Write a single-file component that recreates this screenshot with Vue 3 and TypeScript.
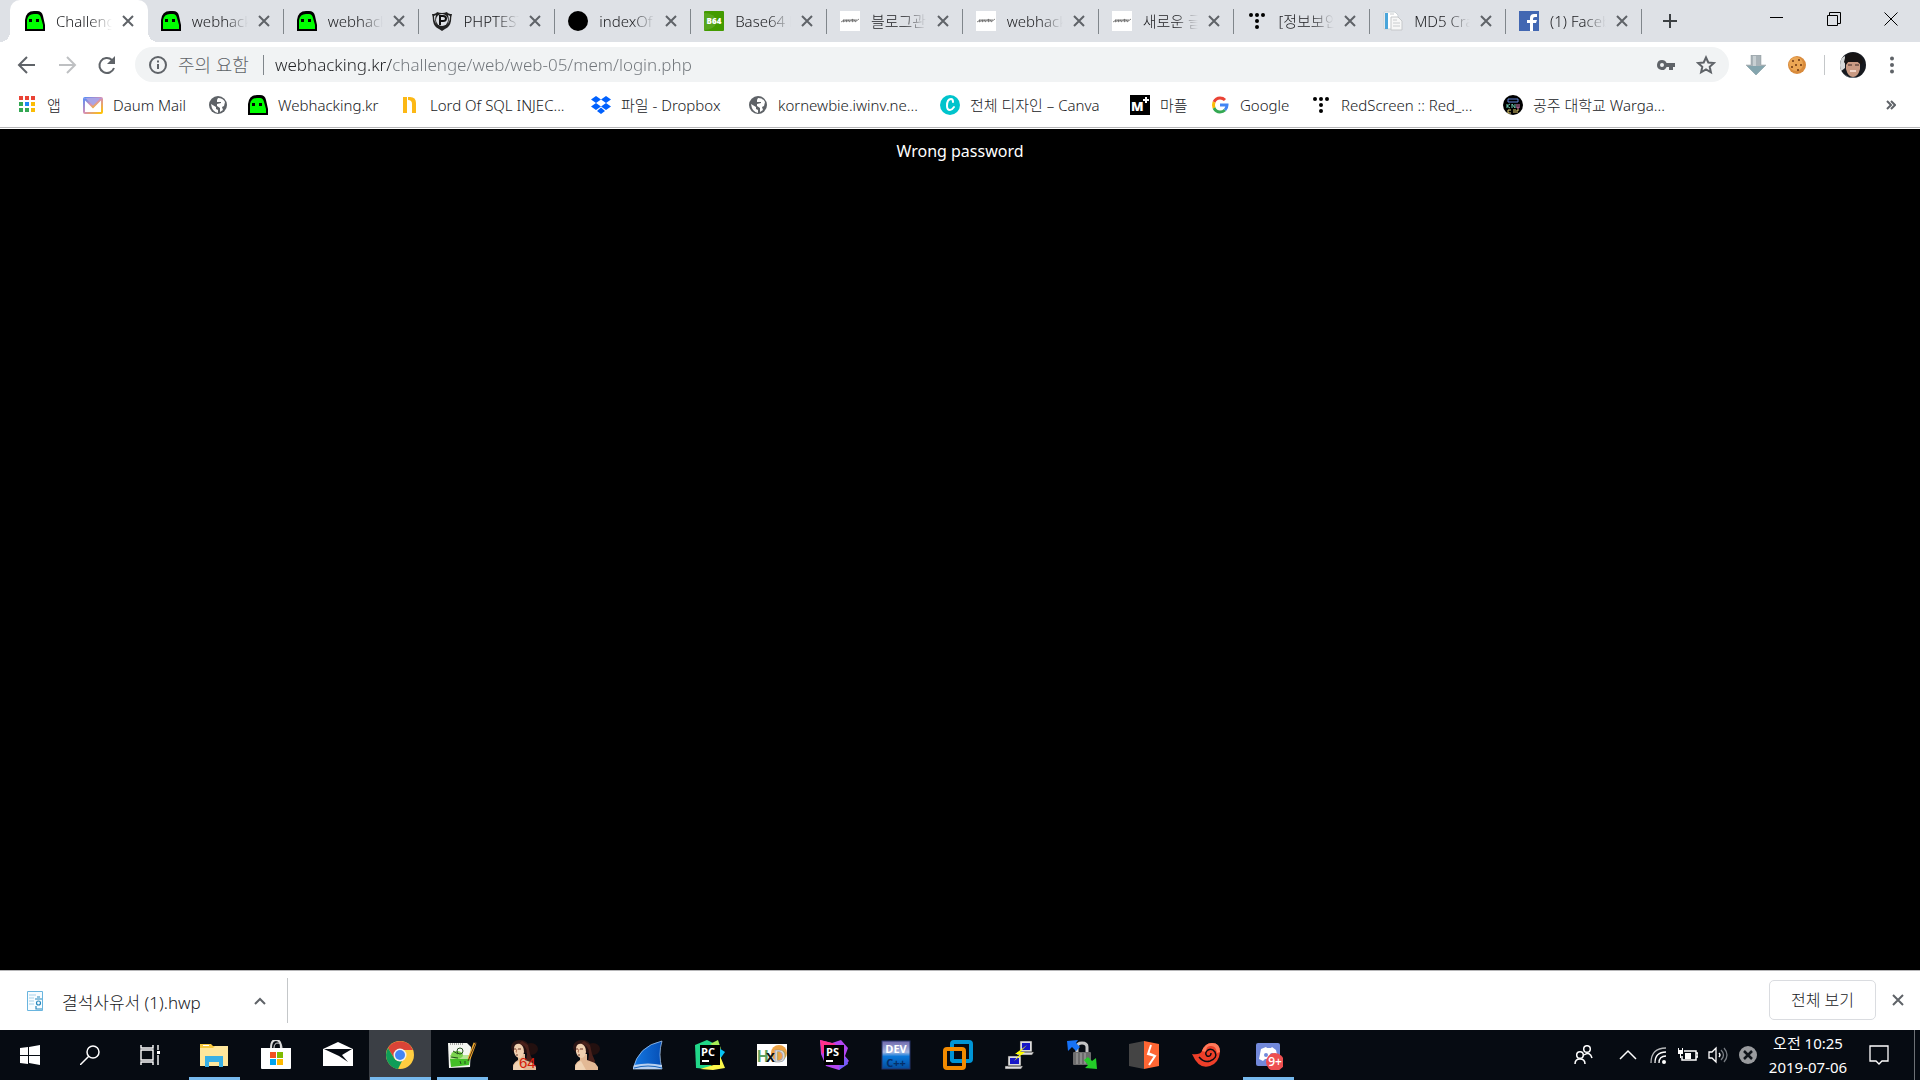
<script setup lang="ts">
import { ref } from 'vue'

interface Entry {
  icon: string
  label: string
}

interface TaskApp extends Entry {
  open?: boolean
  active?: boolean
}

const portrait =
  '<ellipse cx="11" cy="7" rx="9" ry="7" fill="#2b1514"/><ellipse cx="22" cy="9" rx="7" ry="6" fill="#23100f"/><path fill="#4a211b" d="M9 4q9 0 9 10l-1 8 5 4 2-5-3-7-2-9-6-4z"/><path fill="#e3b995" d="M9 14h7v6l8 3 3 4v3H4v-5q1-3 5-5z"/><path fill="#f0d3b4" d="M4 30q0-7 6-9l5 9z"/><path fill="#f0d0b0" d="M5 8q1-5 6-4 4 2 4 8-1 6-5 6-4-1-5-6z"/><path fill="none" stroke="#6d3526" d="M5 9h2M9 9h3M7 15h2"/><path fill="none" stroke="#b8795c" d="M8 9l-1 3h1"/>'

const icons: Record<string, string> = {
  ghost: '<path fill="#000" d="M0 20V9Q1 0 9 0h3q5 0 6 5l2 9v6z"/><path fill="#0f0" d="M2 18V9q1-6 7-6h3q3 0 4 4l2 7v4z"/><path d="M4 8h3v3H4zM11 8h3v3h-3z"/>',
  shield: '<path fill="#222" d="M0 3q4 0 5-2 5 2 10 0 1 2 5 2-1 3-1 7-1 6-6 8l-3 2-3-2Q2 16 1 10 1 6 0 3z"/><path fill="#dee1e6" d="M2 5l2-1q-2 6 1 10-3-3-3-9zM18 5l-2-1q2 6-1 10 3-3 3-9z"/><circle cx="10" cy="9" r="6" fill="#dee1e6"/><path fill="none" stroke="#111" stroke-width="2" d="M8 14V5h3q3 0 3 2.500t-3 2.500H8"/>',
  disc: '<circle cx="10" cy="10" r="10"/>',
  b64: '<rect width="20" height="20" rx="1" fill="#439b00"/><path fill="#68ad31" d="M0 2q11 0 13 9-3 8-13 8z" opacity=".6"/><text x="10" y="13" text-anchor="middle" font-family="Open Sans, sans-serif" font-size="8" font-weight="800" fill="#fff">B64</text>',
  blog: '<path fill="#fff" d="M0 0h20v20H0z"/><path fill="none" stroke="#666" stroke-width=".8" d="M1 11l3-2-1 2 4-2-1 2 3-2v2l4-3-1 3 3-2v2l4-3M3 9h14"/>',
  dots: '<g><circle cx="4" cy="4" r="2"/><circle cx="10" cy="4" r="2"/><circle cx="16" cy="4" r="2"/><circle cx="10" cy="10" r="2"/><circle cx="10" cy="16" r="2"/></g>',
  pages: '<path fill="#fff" stroke="#ccd2d6" d="M1 1h11l3 3v14H1z"/><path fill="#4aa5da" d="M2 2h3v16H2z"/><path fill="#f7f7f7" stroke="#c5c8ca" d="M8 6h7l4 4v9H8z"/><path fill="none" stroke="#c9ccce" d="M7 3h4M10 9h4M10 12h7M10 15h7"/>',
  facebook: '<path fill="#4267b2" d="M0 0h20v20H0z"/><path fill="#fff" d="M11 20v-8H8V9h3V7q0-4 4-4h3v3h-2q-2 0-2 2v1h4l-1 3h-3v8z"/>',
  apps: '<path fill="#ea4335" d="M2 1h4v4H2zM8 1h4v4H8zM14 1h4v4h-4z"/><path fill="#34a853" d="M2 7h4v4H2zM2 13h4v4H2zM8 13h4v4H8z"/><path fill="#1e88f7" d="M8 7h4v4H8z"/><path fill="#fbbc05" d="M14 7h4v4h-4zM14 13h4v4h-4z"/>',
  mail: '<defs><linearGradient id="mailA" x2="1" y2="1"><stop stop-color="#5b8df4"/><stop offset=".5" stop-color="#d78fb5"/><stop offset="1" stop-color="#ffc400"/></linearGradient></defs><rect x="1" y="3" width="18" height="15" rx="1" fill="#fff" stroke="url(#mailA)" stroke-width="2"/><path fill="#a9a4e6" d="M1 3h18l-9 10z"/><path fill="none" stroke="url(#mailA)" stroke-width="2" d="M2 4l8 8 8-8"/>',
  globe: '<circle cx="10" cy="10" r="9" fill="#5f6368"/><path fill="#fff" d="M3 9l5 3v2l2 1v3q-6-1-7-9zM10 3q5 0 7 4l-1 4-2 1 1 3-3 2v-4l-3-2V9l4-1V7H9V5z"/>',
  sql: '<path fill="#fcb815" d="M3 2h4v16H3zM8 2h2q6 0 6 6v10h-4V9q0-4-4-4z"/>',
  dropbox: '<path fill="#0061fe" d="M5 1l5 3.500-5 3.500-5-3.500zM15 1l5 3.500-5 3.500-5-3.500zM5 8l5 3.500-5 3.500-5-3.500zM15 8l5 3.500-5 3.500-5-3.500zM10 12.500l4 3.500-4 3-4-3z"/>',
  canva: '<circle cx="10" cy="10" r="10" fill="#00c4cc"/><path fill="none" stroke="#fff" stroke-width="2" stroke-linecap="round" d="M13 7q0-3-2-3-4 0-4 7 0 4 3 4 2 0 4-3"/>',
  maple: '<path d="M0 0h20v20H0z"/><text x="1" y="16" font-family="Open Sans, sans-serif" font-size="13" font-weight="800" fill="#fff">M</text><path stroke="#fff" stroke-width="2" d="M16 2v6M13 5h6"/>',
  google: '<g fill="none" stroke-width="3"><path stroke="#ea4335" d="M4 7q2-4 6-4 3 0 5 2"/><path stroke="#fbbc05" d="M4 13q-1-3 0-6"/><path stroke="#34a853" d="M4 13q2 4 6 4 3 0 5-2"/><path stroke="#4285f4" d="M10 10h7q0 3-2 5"/></g>',
  knu: '<circle cx="10" cy="10" r="10"/><g fill="none" stroke-width="1"><path stroke="#6284d8" d="M5 4h10v3H5z"/><path stroke="#6ec8b0" d="M4 9v4M7 9l-3 2 3 2M9 13V9l3 4V9"/><path stroke="#db80b8" d="M14 9v4h2V9"/><path stroke="#e4cf71" d="M8 15H5v3h3M10 15h3M10 17h3M16 15h-2v3"/></g>',
  windows: '<path fill="#fff" d="M0 3l8-1v8H0zM9 2l11-2v10H9zM0 11h8v8l-8-1zM9 11h11v9L9 18z"/>',
  search: '<g fill="none" stroke="#fff" stroke-width="1.500"><circle cx="13" cy="7" r="6"/><path d="M9 11L0 20"/></g>',
  taskview: '<g fill="none" stroke="#fff" stroke-width="1.400"><path d="M1 0v3h12V0M1 5h12v10H1zM1 20v-3h12v3M18 0v5M18 10v10"/></g><path fill="#fff" d="M17 6h3v3h-3z"/>',
  explorer: '<path fill="#f8c93e" d="M1 4h11l2 2h15v20H1z"/><path fill="#ffe79b" d="M1 8h13l2-2h13v20H1z"/><path fill="#fff" d="M4 5h6v1H4z"/><path fill="#39b0e5" d="M6 16h18v11h-4v-5H10v5H6z"/>',
  store: '<g fill="none" stroke="#ddd"><path stroke-width="2" d="M10 8q0-8 5-8t5 8"/><path d="M13 8q0-5 4-5t4 5"/></g><path fill="#fff" d="M0 8h30v20q0 1-1 1H1q-1 0-1-1z"/><path fill="#f25022" d="M9 12h6v6H9z"/><path fill="#7fba00" d="M16 12h6v6h-6z"/><path fill="#00a4ef" d="M9 19h6v6H9z"/><path fill="#ffb900" d="M16 19h6v6h-6z"/>',
  envelope: '<path fill="#fff" d="M0 9l15-7 15 7v17H0z"/><path fill="#060b12" d="M1 9h28l-10 6 6 7-9-6z"/>',
  chrome: '<circle cx="15" cy="15" r="14" fill="#ffcd40"/><path fill="#db4437" d="M3 8a14 14 0 0 1 25 2H15l-6 8z"/><path fill="#0f9d58" d="M3 8l6 10q3 4 8 3l-4 8A14 14 0 0 1 3 8z"/><circle cx="15" cy="15" r="6.500" fill="#f1f1f1"/><circle cx="15" cy="15" r="5" fill="#4285f4"/>',
  notepad: '<path fill="#f5f7f2" d="M1 3h19l4 4-1 20-21 1z"/><path stroke="#555" stroke-dasharray="1 1" d="M3 4h13"/><path fill="#b6e693" d="M3 15h19v4H3z"/><path fill="#43bf27" d="M3 19h20l-1 6-18 2z"/><ellipse cx="10" cy="15" rx="6" ry="4" fill="#7ad34d"/><g fill="none" stroke="#264e20"><circle cx="13" cy="11" r="3"/><path d="M4 17l7 1M6 11l5 3M13 21l1 3M18 21v3"/></g><path stroke="#f1ae2c" stroke-width="3" d="M28 3l-6 16"/><path stroke="#552f17" d="M29 2l-8 19"/>',
  ida: portrait,
  ida64: portrait + '<text x="10" y="28" font-family="Liberation Sans, sans-serif" font-size="15" font-weight="400" fill="#d61d0b">64</text>',
  shark: '<defs><linearGradient id="fin"><stop stop-color="#1479e4"/><stop offset="1" stop-color="#064fb5"/></linearGradient></defs><path fill="url(#fin)" stroke="#b4d3f4" stroke-width=".7" d="M0 29Q5 6 29 1q-4 13 0 28z"/><path fill="#b8d0ef" d="M1 25q14-3 28 0v4H0z"/><path fill="none" stroke="#1765bb" d="M1 28q14-4 28 0"/>',
  pycharm: '<path fill="#21d789" d="M0 5l12-5 8 4 1 16-8 9-12-1z"/><path fill="#a8ed54" d="M15 4l8-4 3 9z"/><path fill="#07c3f2" d="M24 8l6 4-5 7z"/><path fill="#fcf84a" d="M25 16l5 12-12 2-13-1 17-5z"/><path fill="#000" d="M5 5h20v20H5z"/><text x="6" y="16" font-family="Open Sans, sans-serif" font-size="11" font-weight="700" fill="#fff">PC</text><path fill="#fff" d="M7 20h7v2H7z"/>',
  hxd: '<path fill="#fff" d="M0 4h30v22H0z"/><circle cx="22" cy="13" r="8" fill="#eca345"/><g font-family="Liberation Sans, sans-serif" font-weight="700"><text x="0" y="22" font-size="16" fill="#5ca061">H</text><text x="17" y="22" font-size="16" fill="#dedede" stroke="#888" stroke-width=".5">D</text><text x="9" y="22" font-size="16" fill="#111">x</text></g>',
  phpstorm: '<path fill="#b345f1" d="M1 0l12 3 9-3 7 8-3 8 4 5-10 9-13-4-5-12z"/><path fill="#ff318c" d="M1 0l16 4-14 10z"/><path fill="#765af8" d="M21 19l7-1 1 6-9 6z"/><path d="M5 5h20v20H5z"/><text x="7" y="16" font-family="Open Sans, sans-serif" font-size="11" font-weight="700" fill="#fff">PS</text><path fill="#fff" d="M7 20h7v2H7z"/>',
  dev: '<defs><linearGradient id="devB" x2="0" y2="1"><stop stop-color="#7069ac"/><stop offset=".4" stop-color="#a4b8e2"/><stop offset=".55" stop-color="#0877d9"/><stop offset="1" stop-color="#064c9c"/></linearGradient></defs><rect x="1" y="1" width="28" height="28" fill="url(#devB)" stroke="#263469"/><g font-family="Open Sans, sans-serif" font-weight="700" text-anchor="middle"><text x="15" y="13" font-size="11" fill="#fff">DEV</text><text x="15" y="27" font-size="11" fill="#052f68">C++</text></g>',
  vmware: '<g fill="none" stroke-width="4"><rect x="9" y="2" width="19" height="19" rx="2" stroke="#0095d5"/><rect x="2" y="9" width="19" height="19" rx="2" stroke="#f38b00"/><path stroke="#0095d5" d="M9 14v5q0 2 2 2h8"/></g>',
  putty: '<g stroke="#222" stroke-width=".5"><path fill="#ddd" d="M15 1h12v11H15zM12 12h17l-2 3H12zM3 16h13v10H3zM0 26h18l-2 3H0z"/></g><path fill="#1717c8" d="M17 3h8v7h-8zM5 18h9v6H5z"/><path fill="#ff0" d="M22 5L10 14h5l-6 7 11-9h-5z"/>',
  lock: '<path fill="none" stroke="#c4c4c4" stroke-width="3" d="M10 14V7q0-4 5-4t5 4v7"/><rect x="6" y="12" width="18" height="13" rx="1" fill="#6c6c6c"/><path stroke="#aaa" d="M10 13v11M14 13v11M18 13v11"/><path fill="#1672f7" d="M0 1l11-1-2 3 4 4-4 4-4-4-4 4z"/><path fill="#23cd28" d="M30 29l-12-1 3-3-4-5 4-3 4 4 4-3z"/>',
  burp: '<path fill="#444" d="M0 4l15-3v28L0 26z"/><path fill="#ff6633" d="M15 1l15 3v22l-15 3z"/><path fill="none" stroke="#fff" stroke-width="2" d="M22 5l-3 9 7 2-6 9M19 13l7 3"/>',
  snail: '<path fill="#ed3f29" d="M1 14q8 1 10-3 3-8 10-8 8 0 8 9-1 11-10 14Q8 30 1 14z"/><path fill="#ff7b5b" d="M11 11q3-8 10-8 8 0 8 9l-3 1q-1-8-7-7-4 0-4 6z"/><path fill="none" stroke="#060b12" stroke-width="1.500" d="M8 17q5 6 11 4 8-3 5-9-3-4-7-2-4 3-1 6 4 1 4-3"/>',
  discord: '<rect x="3" y="3" width="24" height="23" rx="2" fill="#7289da"/><path fill="#fff" d="M8 9l5-2 1 1h4l1-1 4 3 2 9-4 2-2-2h-7l-2 2-4-2z"/><circle cx="13" cy="15" r="2" fill="#7289da"/><circle cx="19" cy="15" r="2" fill="#7289da"/><circle cx="22" cy="22" r="9" fill="#ed4f50"/><text x="22" y="26" text-anchor="middle" font-family="Open Sans, sans-serif" font-size="12" font-weight="600" fill="#fff">9+</text>',
  people: '<g fill="none" stroke="#fff" stroke-width="1.500"><circle cx="14" cy="4" r="3.300"/><circle cx="7" cy="10" r="3.300"/><path d="M2 19q0-5 5-5t5 5M11 10q6-4 8 3"/></g>',
  up: '<path fill="none" stroke="#fff" stroke-width="1.500" d="M2 14l8-8 8 8"/>',
  wifi: '<g fill="none" stroke="#fff" stroke-width="1.300"><path d="M3 18Q3 3 18 3" opacity=".7"/><path d="M7 18Q7 7 18 7M11 18q0-7 7-7"/></g><circle cx="16" cy="17" r="2" fill="#fff"/>',
  battery: '<path fill="none" stroke="#fff" stroke-width="1.500" d="M6 6h12v9H4v-4M18 8h2v4h-2"/><path fill="#fff" d="M7 8h6v6H7zM0 5h5v4H3v4H2V9H0zM0 3h1v2H0zM4 3h1v2H4z"/>',
  sound: '<path fill="none" stroke="#fff" stroke-width="1.300" d="M1 7h3l4-4v14l-4-4H1zM11 8q2 2 0 4"/><path fill="none" stroke="#777c82" stroke-width="1.300" d="M13 5q5 5 0 10M16 3q6 7 0 14"/>',
  blocked: '<circle cx="10" cy="10" r="9" fill="#999b9e"/><path stroke="#10151b" stroke-width="2.500" d="M6 6l8 8M14 6l-8 8"/>',
  notice: '<path fill="none" stroke="#fff" stroke-width="1.300" d="M1 1h18v15h-6l-3 3-3-3H1z"/>',
}

const tabs: Entry[] = [
  { icon: 'ghost', label: 'Challenge' },
  { icon: 'ghost', label: 'webhacking' },
  { icon: 'ghost', label: 'webhacking' },
  { icon: 'shield', label: 'PHPTEST' },
  { icon: 'disc', label: 'indexOf' },
  { icon: 'b64', label: 'Base64 D' },
  { icon: 'blog', label: '블로그관' },
  { icon: 'blog', label: 'webhack' },
  { icon: 'blog', label: '새로운 글' },
  { icon: 'dots', label: '[정보보안' },
  { icon: 'pages', label: 'MD5 Crack' },
  { icon: 'facebook', label: '(1) Facebook' },
]

const bookmarks: Entry[] = [
  { icon: 'apps', label: '앱' },
  { icon: 'mail', label: 'Daum Mail' },
  { icon: 'globe', label: '' },
  { icon: 'ghost', label: 'Webhacking.kr' },
  { icon: 'sql', label: 'Lord Of SQL INJEC...' },
  { icon: 'dropbox', label: '파일 - Dropbox' },
  { icon: 'globe', label: 'kornewbie.iwinv.ne...' },
  { icon: 'canva', label: '전체 디자인 – Canva' },
  { icon: 'maple', label: '마플' },
  { icon: 'google', label: 'Google' },
  { icon: 'dots', label: 'RedScreen :: Red_...' },
  { icon: 'knu', label: '공주 대학교 Warga...' },
]

const system: Entry[] = [
  { icon: 'windows', label: 'Start' },
  { icon: 'search', label: 'Search' },
  { icon: 'taskview', label: 'Task view' },
]

const apps: TaskApp[] = [
  { icon: 'explorer', label: 'Explorer', open: true },
  { icon: 'store', label: 'Store' },
  { icon: 'envelope', label: 'Mail' },
  { icon: 'chrome', label: 'Chrome', open: true, active: true },
  { icon: 'notepad', label: 'Notepad++', open: true },
  { icon: 'ida64', label: 'IDA 64' },
  { icon: 'ida', label: 'IDA' },
  { icon: 'shark', label: 'Wireshark' },
  { icon: 'pycharm', label: 'PyCharm' },
  { icon: 'hxd', label: 'HxD' },
  { icon: 'phpstorm', label: 'PhpStorm' },
  { icon: 'dev', label: 'Dev-C++' },
  { icon: 'vmware', label: 'VMware' },
  { icon: 'putty', label: 'PuTTY' },
  { icon: 'lock', label: 'WinSCP' },
  { icon: 'burp', label: 'Burp Suite' },
  { icon: 'snail', label: 'Nautilus' },
  { icon: 'discord', label: 'Discord', open: true },
]

const tray: Entry[] = [
  { icon: 'wifi', label: 'Network' },
  { icon: 'battery', label: 'Battery' },
  { icon: 'sound', label: 'Volume' },
  { icon: 'blocked', label: 'Sync' },
]

const address = ref('webhacking.kr/challenge/web/web-05/mem/login.php')
const current = ref(0)
</script>

<template>
  <div class="screen">
    <header class="strip">
      <div class="tabs">
        <div v-for="(tab, i) in tabs" :key="i" class="tab" :class="{ current: i === current }">
          <button class="tab-title" @click="current = i">
            <svg class="i20" viewBox="0 0 20 20" v-html="icons[tab.icon]"></svg>
            <span>{{ tab.label }}</span>
          </button>
          <button class="close" aria-label="Close tab">
            <svg viewBox="0 0 12 12"><path d="M1 1l10 10M11 1L1 11" /></svg>
          </button>
        </div>
      </div>
      <button class="new-tab" aria-label="New tab">
        <svg viewBox="0 0 16 16"><path d="M8 1v14M1 8h14" /></svg>
      </button>
      <div class="window">
        <button aria-label="Minimize"><svg viewBox="0 0 14 14"><path d="M0 5.500h13" /></svg></button>
        <button aria-label="Restore"><svg viewBox="0 0 14 14"><path d="M.5 3.500h10v10H.500zM2.500 3V.500h11v11H11" /></svg></button>
        <button aria-label="Close"><svg viewBox="0 0 14 14"><path d="M.5.500l13 13M13.500.500l-13 13" /></svg></button>
      </div>
    </header>

    <div class="toolbar">
      <nav class="history">
        <button aria-label="Back"><svg viewBox="0 0 20 20"><path d="M18 10H3M10 2l-8 8 8 8" /></svg></button>
        <button class="dim" aria-label="Forward"><svg viewBox="0 0 20 20"><path d="M2 10h15M10 2l8 8-8 8" /></svg></button>
        <button aria-label="Reload"><svg viewBox="0 0 20 20"><path d="M17 13a7.500 7.500 0 1 1-2-8l2 2" /><path class="solid" d="M18 1v8h-8z" /></svg></button>
      </nav>
      <form class="omnibox" @submit.prevent>
        <svg class="i20 line" viewBox="0 0 20 20"><circle cx="10" cy="10" r="8" /><path d="M10 9v5M10 5.500v2" /></svg>
        <label for="address">주의 요함</label>
        <input id="address" v-model="address" type="text" spellcheck="false" />
        <button type="button" aria-label="Password">
          <svg class="i20" viewBox="0 0 20 20"><path class="solid" fill-rule="evenodd" d="M6 5a5 5 0 0 1 4.600 3H19v4h-2v3h-4v-3h-2.400A5 5 0 1 1 6 5zm0 3a2 2 0 1 0 0 4 2 2 0 0 0 0-4z" /></svg>
        </button>
        <button type="button" aria-label="Bookmark">
          <svg class="i20 line" viewBox="0 0 20 20"><path d="M10 2.500l2.300 5 5.500.600-4.100 3.700 1.200 5.500-4.900-2.900-4.900 2.900 1.200-5.500L2.200 8.100l5.500-.6z" /></svg>
        </button>
      </form>
      <div class="extensions">
        <button aria-label="Downloader">
          <svg class="i20" viewBox="0 0 20 20"><path fill="#a9b3b8" stroke="#8f9a9f" stroke-width=".5" d="M5 0h10v10h5L10 20 0 10h5z" /><path fill="#84a5ae" d="M1 11h18l-9 9z" /><path fill="#c8d0d3" d="M7 1h3v10H7z" /></svg>
        </button>
        <button aria-label="Cookies">
          <svg class="i20" viewBox="0 0 20 20"><circle cx="10" cy="10" r="9" fill="#d98b3c" /><circle cx="9" cy="9" r="7" fill="#eba654" /><g fill="#6d3510"><circle cx="6" cy="6" r="1" /><circle cx="12" cy="5" r="1" /><circle cx="9" cy="10" r="1" /><circle cx="14" cy="10" r="1" /><circle cx="5" cy="12" r="1" /><circle cx="11" cy="15" r="1" /></g></svg>
        </button>
        <span class="rule"></span>
        <button aria-label="Profile">
          <svg class="i26" viewBox="0 0 26 26"><defs><clipPath id="face"><circle cx="13" cy="13" r="13" /></clipPath></defs><g clip-path="url(#face)"><path fill="#16191f" d="M0 0h26v26H0z" /><path fill="#d5d8d9" d="M0 7l5-3v12l-5 4z" /><path fill="#c99a83" d="M6 11q7-4 14 0v6q-2 8-7 8t-7-8z" /><path fill="#171414" d="M4 10Q5 1 13 1t10 9l-2 3-3-3H8l-2 3z" /><path stroke="#3a2824" d="M8 13h4M15 13h4" /><path stroke="#f0d4c7" stroke-width="2" d="M10 19h6" /><path fill="#6d7680" d="M4 22l5 3h10l4-3v4H4z" /></g></svg>
        </button>
        <button aria-label="Menu">
          <svg class="i20" viewBox="0 0 20 20"><g fill="#5f6368"><circle cx="10" cy="3.500" r="2" /><circle cx="10" cy="10" r="2" /><circle cx="10" cy="16.500" r="2" /></g></svg>
        </button>
      </div>
    </div>

    <nav class="bookmarks">
      <a v-for="(mark, i) in bookmarks" :key="i" href="#">
        <svg class="i20" viewBox="0 0 20 20" v-html="icons[mark.icon]"></svg>
        <span v-if="mark.label">{{ mark.label }}</span>
      </a>
      <button class="more" aria-label="More bookmarks"><svg viewBox="0 0 10 10"><path d="M1 1l4 4-4 4M5 1l4 4-4 4" /></svg></button>
    </nav>

    <main class="page">Wrong password</main>

    <section class="downloads">
      <div class="file">
        <svg class="i20" viewBox="0 0 20 20"><path fill="#f7fcff" stroke="#69b5df" d="M2.500.500h15v19h-15z" /><path stroke="#a7d1e8" d="M4 4h7M4 7h5M4 10h5M4 13h5" /><g fill="none" stroke="#2788bd" stroke-width="1.200"><path d="M12 6h3M10 8h7M11 15v3h6" /><circle cx="13.500" cy="12" r="2" /></g></svg>
        <a href="#">결석사유서 (1).hwp</a>
        <button aria-label="Download options"><svg viewBox="0 0 12 12"><path d="M1 9l5-5 5 5" /></svg></button>
      </div>
      <button class="show-all">전체 보기</button>
      <button class="close" aria-label="Close downloads"><svg viewBox="0 0 12 12"><path d="M1 1l10 10M11 1L1 11" /></svg></button>
    </section>

    <footer class="taskbar">
      <div class="system">
        <button v-for="item in system" :key="item.icon" :aria-label="item.label">
          <svg class="i20" viewBox="0 0 20 20" v-html="icons[item.icon]"></svg>
        </button>
      </div>
      <div class="apps">
        <button v-for="app in apps" :key="app.icon" :class="{ open: app.open, active: app.active }" :aria-label="app.label">
          <svg class="i30" viewBox="0 0 30 30" v-html="icons[app.icon]"></svg>
        </button>
      </div>
      <div class="tray">
        <button class="people" aria-label="People"><svg class="i20" viewBox="0 0 20 20" v-html="icons.people"></svg></button>
        <button aria-label="Hidden icons"><svg class="i20" viewBox="0 0 20 20" v-html="icons.up"></svg></button>
        <button v-for="item in tray" :key="item.icon" :aria-label="item.label">
          <svg class="i20" viewBox="0 0 20 20" v-html="icons[item.icon]"></svg>
        </button>
        <time datetime="2019-07-06T10:25"><span>오전 10:25</span><span>2019-07-06</span></time>
        <button class="notice" aria-label="Notifications"><svg class="i20" viewBox="0 0 20 20" v-html="icons.notice"></svg></button>
      </div>
    </footer>
  </div>
</template>

<style>
body {
  margin: 0;
  background: #000;
}
</style>

<style scoped>
.screen {
  display: flex;
  flex-direction: column;
  min-height: 100vh;
  font-family: "Noto Sans", "Noto Sans CJK KR", sans-serif;
  font-size: 15px;
  font-weight: 300;
  line-height: 20px;
  color: #202124;
  background: #fff;
}

button {
  display: flex;
  align-items: center;
  justify-content: center;
  margin: 0;
  padding: 0;
  border: 0;
  background: none;
  color: inherit;
  font: inherit;
}

a {
  color: inherit;
  text-decoration: none;
}

svg {
  display: block;
  flex: none;
}

.i20 {
  width: 20px;
  height: 20px;
}

.i26 {
  width: 26px;
  height: 26px;
}

.i30 {
  width: 30px;
  height: 30px;
}

.solid {
  fill: #5f6368;
  stroke: none;
}

.line {
  fill: none;
  stroke: #5f6368;
  stroke-width: 2;
}

.strip {
  display: flex;
  height: 42px;
  padding-left: 12px;
  background: #dee1e6;
}

.tabs {
  display: flex;
  flex: 1;
  min-width: 0;
}

.tab {
  display: flex;
  flex: 1;
  align-items: center;
  min-width: 0;
  box-sizing: border-box;
  padding: 0 14px 0 13px;
  background: linear-gradient(#80868b, #80868b) right 9px / 1px 25px no-repeat;
}

.tab.current {
  position: relative;
  margin-left: -2px;
  padding-left: 15px;
  background: #fff;
  border-radius: 10px 10px 0 0;
}

.tab.current::before,
.tab.current::after {
  position: absolute;
  bottom: 0;
  width: 10px;
  height: 10px;
  content: "";
}

.tab.current::before {
  right: 100%;
  background: radial-gradient(circle at 0 0, transparent 10px, #fff 10px);
}

.tab.current::after {
  left: 100%;
  background: radial-gradient(circle at 100% 0, transparent 10px, #fff 10px);
}

.tab-title {
  flex: 1;
  gap: 11px;
  justify-content: flex-start;
  min-width: 0;
}

.tab-title span {
  flex: 1;
  min-width: 0;
  overflow: hidden;
  text-align: left;
  white-space: nowrap;
  mask-image: linear-gradient(to right, #000 60%, transparent);
}

.close {
  flex: none;
  margin-left: 10px;
}

.close svg {
  width: 12px;
  height: 12px;
  fill: none;
  stroke: #5f6368;
  stroke-width: 2;
}

.new-tab {
  flex: none;
  width: 55px;
}

.new-tab svg {
  width: 16px;
  height: 16px;
  stroke: #3c4043;
  stroke-width: 2;
}

.window {
  display: flex;
  flex: none;
  gap: 43px;
  align-items: center;
  height: 38px;
  padding: 0 22px 0 73px;
}

.window svg {
  width: 14px;
  height: 14px;
  fill: none;
  stroke: #000;
}

.toolbar {
  display: flex;
  align-items: center;
  height: 45px;
}

.history {
  display: flex;
  width: 118px;
  gap: 20px;
  padding-left: 17px;
}

.history svg {
  width: 20px;
  height: 20px;
  fill: none;
  stroke: #5f6368;
  stroke-width: 2;
}

.history .dim {
  opacity: .4;
}

.omnibox {
  display: flex;
  flex: 1;
  align-items: center;
  height: 35px;
  padding: 0 13px;
  background: #f1f3f4;
  border-radius: 18px;
}

.omnibox label {
  margin: 0 11px 0 10px;
  padding-right: 14px;
  border-right: 1px solid #80868b;
  color: #5f6368;
  font-size: 18px;
}

.omnibox input {
  flex: 1;
  min-width: 0;
  padding: 0;
  border: 0;
  outline: 0;
  background: linear-gradient(to right, #202124 117px, #70757a 117px);
  background-clip: text;
  color: transparent;
  font: inherit;
  font-size: 17px;
  line-height: 26px;
}

.omnibox button {
  margin-left: 20px;
}

.extensions {
  display: flex;
  align-items: center;
  padding: 0 18px 0 17px;
}

.extensions button + button {
  margin-left: 21px;
}

.rule {
  width: 1px;
  height: 20px;
  margin: 0 15px 0 17px;
  background: #c4c7c9;
}

.extensions .rule + button + button {
  margin-left: 16px;
}

.bookmarks {
  display: grid;
  grid-template-columns: 66px 125px 40px 152px 191px 157px 192px 190px 80px 101px 192px 1fr auto;
  align-items: center;
  height: 35px;
  padding: 0 24px 5px 17px;
  border-bottom: 1px solid #b6b6b8;
}

.bookmarks a {
  display: flex;
  gap: 10px;
  align-items: center;
  white-space: nowrap;
}

.more svg {
  width: 10px;
  height: 10px;
  fill: none;
  stroke: #5f6368;
  stroke-width: 2;
}

.page {
  flex: 1;
  padding-top: 12px;
  border-top: 1px solid #fff;
  background: #000;
  color: #fff;
  font-size: 16px;
  font-weight: 400;
  text-align: center;
}

.downloads {
  display: flex;
  align-items: center;
  height: 59px;
  padding-right: 16px;
  border-top: 1px solid #b6b6b8;
  font-size: 16px;
}

.file {
  display: flex;
  align-items: center;
  width: 262px;
  height: 45px;
  padding-left: 25px;
  border-right: 1px solid #c4c7c9;
}

.file a {
  flex: 1;
  padding: 4px 0 0 17px;
  font-size: 17px;
}

.file button {
  margin-right: 21px;
}

.file button svg {
  width: 12px;
  height: 12px;
  fill: none;
  stroke: #5f6368;
  stroke-width: 2;
}

.show-all {
  width: 107px;
  height: 40px;
  margin: 0 0 2px auto;
  border: 1px solid #dadce0;
  border-radius: 5px;
}

.downloads .close {
  margin: 0 0 2px 16px;
}

.taskbar {
  display: flex;
  height: 50px;
  background: #060b12;
  color: #fff;
  font-weight: 400;
}

.system {
  display: flex;
  width: 183px;
}

.system button {
  width: 60px;
}

.apps {
  display: flex;
}

.apps button {
  width: 62px;
}

.apps .open {
  background: linear-gradient(#76b9ed, #76b9ed) center bottom / 51px 3px no-repeat;
}

.apps .active {
  background: linear-gradient(#76b9ed, #76b9ed) center bottom / 61px 3px no-repeat, #3b3f45;
}

.tray {
  display: flex;
  gap: 10px;
  align-items: center;
  margin-left: auto;
  padding-right: 5px;
}

.people {
  margin-right: 15px;
}

.tray time {
  display: flex;
  flex-direction: column;
  width: 80px;
  line-height: 24px;
  text-align: center;
}

.tray .notice {
  height: 50px;
  margin-left: 11px;
  padding-right: 25px;
  border-right: 1px solid #6d7176;
}
</style>
